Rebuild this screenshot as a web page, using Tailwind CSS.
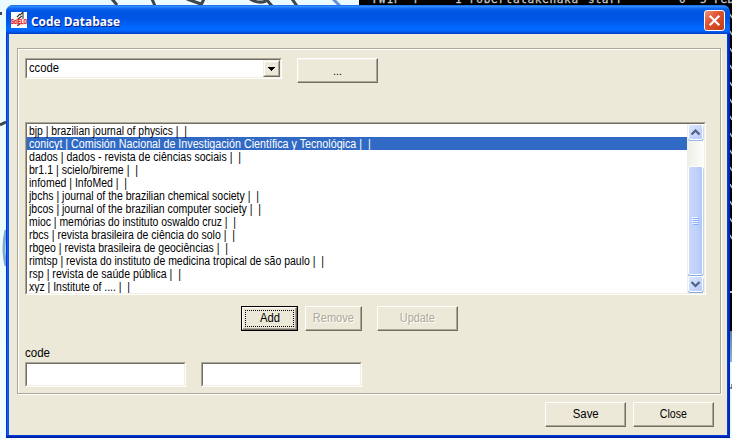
<!DOCTYPE html>
<html lang="en">
<head>
<meta charset="utf-8">
<title>Code Database</title>
<script src="https://cdn.jsdelivr.net/npm/@tailwindcss/browser@4"></script>
</head>
<body class="relative w-[732px] h-[439px] overflow-hidden bg-[#f0ffff] font-['Liberation_Sans',Arial,sans-serif] text-[12px] leading-[13px] text-black">
<!-- desktop behind the dialog -->
<svg class="absolute left-0 top-0" width="732" height="439" viewBox="0 0 732 439">
  <defs><linearGradient id="sky" x2="0" y2="1"><stop offset="0" stop-color="#e9fbfd"/><stop offset="1" stop-color="#f0ffff"/></linearGradient>
  <linearGradient id="blk" x2="0" y2="1"><stop offset="0" stop-color="#5e83ac"/><stop offset="1" stop-color="#86b4d8"/></linearGradient></defs>
  <rect width="732" height="439" fill="url(#sky)"/>
  <g fill="none" stroke="#3f444e" stroke-width="3">
    <path d="M0 13.500L2 13.500M0 125L6 122M112 -1L117 5M152 -1L155 6M187 -1L201 4M201 5L204 -1M250 -1Q258 4 266 1M266 -1L272 6M292 -1L297 6"/>
    <path d="M6 230Q2 248 6 266" stroke="#7fa9d8"/><path d="M333 -1L340 6" stroke="#6a90d8"/>
  </g>
  <rect x="359" y="0" width="373" height="331" fill="#000"/>
  <rect x="727" y="331" width="5" height="31" fill="url(#blk)"/>
  <rect x="727" y="362" width="5" height="77" fill="#eefbfb"/>
  <path d="M730 292h2" stroke="#ccc" stroke-width="2"/>
  <path d="M730 388h2v-4" stroke="#222" fill="none"/>
  <g fill="#c8c8c8" stroke="#c8c8c8" stroke-width=".3" font-family="'DejaVu Sans Mono',monospace" font-size="11">
    <text x="371" y="2.500" textLength="22">TW1</text><text x="393" y="2.500">r</text><text x="413" y="2.500">r</text><text x="455" y="2.500">1</text><text x="469" y="2.500" textLength="109">robertatakenaka</text><text x="588" y="2.500" textLength="34">staff</text><text x="679" y="2.500">0</text><text x="700" y="2.500">5</text><text x="714" y="2.500">Feb</text>
  </g>
  <path d="M730 14l2 4M730 31l2 4M730 48l2 4M730 65l2 4M730 82l2 4M730 99l2 4M730 116l2 4M730 133l2 4M730 150l2 4M730 167l2 4M730 184l2 4M730 201l2 4M730 218l2 4M730 235l2 4" stroke="#a9bdcb" stroke-width="1.5"/>
</svg>

<main class="relative ml-[6px] mt-[5px] w-[724px] h-[433px] flex flex-col rounded-t-[7px] overflow-hidden bg-[linear-gradient(90deg,#0831d9_0,#0831d9_1px,#1660ee_1px,#0855e5_3px,#0044dd_721px,#0036d6_722px,#001ca0_724px)]">
  <header class="h-[29px] shrink-0 flex items-center pl-[5px] pr-[5px] bg-[linear-gradient(180deg,#0855dd_0,#3a92ff_1px,#2481fb_2px,#0a62ee_4px,#0054e3_7px,#0055e5_14px,#005ff5_19px,#0068ff_22px,#0066ff_26px,#0052e0_27px,#003fd0_29px)]">
    <svg class="mt-[1px] shrink-0" width="16" height="16" viewBox="0 0 16 16">
      <rect width="16" height="16" fill="#fff"/>
      <path d="M6 5L9 2M9 3L12 0L12 7M7 7L11 4M6 13Q8 14 9 11" fill="none" stroke="#333" stroke-width="1.1"/>
      <text x="0" y="11.500" fill="#e81818" stroke="#e81818" stroke-width=".4" font-family="'Liberation Sans',sans-serif" font-size="7" font-weight="bold" textLength="16" lengthAdjust="spacingAndGlyphs">SciELO</text>
    </svg>
    <h1 class="ml-[4px] mt-[3px] whitespace-nowrap font-['Open_Sans',sans-serif] font-bold text-[13px] leading-[18px] text-white [text-shadow:1px_1px_0_#0a1883]"><span class="inline-block origin-left" data-w="89" data-font="bold 13px 'Open Sans'">Code Database</span></h1>
    <svg class="ml-auto mt-[1px]" width="21" height="21" viewBox="0 0 21 21">
      <defs><linearGradient id="red" x2="1" y2="1"><stop offset="0" stop-color="#ee9a80"/><stop offset=".4" stop-color="#e05433"/><stop offset="1" stop-color="#c13a12"/></linearGradient></defs>
      <rect x=".5" y=".5" width="20" height="20" rx="2.5" fill="url(#red)" stroke="#fff"/>
      <path d="M5.7 5.7L15.3 15.3M15.3 5.7L5.7 15.3" stroke="#fff" stroke-width="2.2"/>
    </svg>
  </header>

  <div class="mx-[3px] h-[401px] shrink-0 bg-[#ece9d8] pt-[14px] pl-[8px]">
    <section class="w-[704px] h-[346px] border border-[#aca899] shadow-[inset_1px_1px_0_#fff,1px_1px_0_#fff] pl-[7px] pt-[9px]">
      <div class="flex h-[26px] items-start gap-[15px]">
        <div class="w-[257px] h-[21px] border border-t-[#aca899] border-l-[#aca899] border-r-white border-b-white">
          <div class="h-[19px] border border-t-[#716f64] border-l-[#716f64] border-r-[#f1efe2] border-b-[#f1efe2] bg-white flex justify-between">
            <span class="pl-[2px] pt-[2px]"><span class="inline-block origin-left" data-w="30">ccode</span></span>
            <div class="w-[17px] h-[17px] border border-t-[#f1efe2] border-l-[#f1efe2] border-r-[#716f64] border-b-[#716f64]">
              <div class="h-[15px] bg-[#ece9d8] border border-t-white border-l-white border-r-[#aca899] border-b-[#aca899] flex items-center justify-center">
                <svg width="7" height="4" viewBox="0 0 7 4" shape-rendering="crispEdges"><path d="M0 0h7v1h-1v1h-1v1h-1v1h-1v-1h-1v-1h-1v-1h-1z"/></svg>
              </div>
            </div>
          </div>
        </div>
        <button class="w-[81px] h-[25px] border border-t-white border-l-white border-r-[#716f64] border-b-[#716f64] shadow-[inset_-1px_-1px_0_#aca899,inset_1px_1px_0_#f1efe2] pt-[2px] text-[11px]">...</button>
      </div>

      <div class="mt-[38px] w-[681px] h-[173px] border border-t-[#aca899] border-l-[#aca899] border-r-white border-b-white">
        <div class="h-[171px] border border-t-[#716f64] border-l-[#716f64] border-r-[#f1efe2] border-b-[#f1efe2] bg-white flex overflow-hidden">
          <ul class="w-[660px] h-[169px] overflow-hidden [&>li]:whitespace-pre [&>li]:h-[13px] [&>li]:pl-[2px] [&>li]:leading-[13px] [&_span]:inline-block [&_span]:origin-left [&_span]:translate-y-px">
            <li><span data-w="158">bjp | brazilian journal of physics |  |</span></li>
            <li class="bg-[#316ac5] text-white"><span data-w="342">conicyt | Comisión Nacional de Investigación Científica y Tecnológica |  |</span></li>
            <li><span data-w="212">dados | dados - revista de ciências sociais |  |</span></li>
            <li><span data-w="109">br1.1 | scielo/bireme |  |</span></li>
            <li><span data-w="98">infomed | InfoMed |  |</span></li>
            <li><span data-w="230">jbchs | journal of the brazilian chemical society |  |</span></li>
            <li><span data-w="232">jbcos | journal of the brazilian computer society |  |</span></li>
            <li><span data-w="207">mioc | memórias do instituto oswaldo cruz |  |</span></li>
            <li><span data-w="206">rbcs | revista brasileira de ciência do solo |  |</span></li>
            <li><span data-w="199">rbgeo | revista brasileira de geociências |  |</span></li>
            <li><span data-w="295">rimtsp | revista do instituto de medicina tropical de são paulo |  |</span></li>
            <li><span data-w="152">rsp | revista de saúde pública |  |</span></li>
            <li><span data-w="101">xyz | Institute of .... |  |</span></li>
          </ul>
          <svg width="17" height="169" viewBox="0 0 17 169">
            <defs><linearGradient id="tr"><stop offset="0" stop-color="#eeede5"/><stop offset="1" stop-color="#fefefb"/></linearGradient>
            <linearGradient id="th"><stop offset="0" stop-color="#cad8fd"/><stop offset=".7" stop-color="#bdcffb"/><stop offset="1" stop-color="#b0c5f5"/></linearGradient>
            <linearGradient id="bt" x2="1" y2="1"><stop offset="0" stop-color="#dfe8ff"/><stop offset="1" stop-color="#b4c8f7"/></linearGradient></defs>
            <rect width="17" height="169" fill="url(#tr)"/>
            <g stroke="#fff">
              <rect x="1" y="1" width="15.5" height="16" rx="2" fill="#98b5e8" stroke="none"/>
              <rect x="1.5" y=".5" width="14" height="15" rx="1.5" fill="url(#bt)"/>
              <rect x="1" y="43" width="15.5" height="109" rx="2" fill="#84a8e4" stroke="none"/>
              <rect x="1.5" y="42.500" width="14" height="108" rx="1.5" fill="url(#th)"/>
              <rect x="1" y="153" width="15.5" height="16" rx="2" fill="#84a8e4" stroke="none"/>
              <rect x="1.500" y="152.500" width="14" height="15" rx="1.5" fill="url(#bt)"/>
            </g>
            <path d="M4.500 10.500L8.500 6.500L12.500 10.500M4.500 158L8.500 162L12.500 158" fill="none" stroke="#4d6185" stroke-width="2.200"/>
            <path d="M5 93.500h6M5 95.500h6M5 97.500h6M5 99.500h6" stroke="#eef4fe"/>
            <path d="M6 94.500h6M6 96.500h6M6 98.500h6M6 100.500h6" stroke="#8cb0f8"/>
          </svg>
        </div>
      </div>

      <div class="mt-[11px] ml-[216px] flex h-[25px]">
        <button class="w-[57px] h-[25px] border border-black p-0 mr-[7px]">
          <span class="block h-[23px] border border-t-white border-l-white border-r-[#716f64] border-b-[#716f64] shadow-[inset_-1px_-1px_0_#aca899] p-[2px]">
            <svg class="block" width="49" height="17" viewBox="0 0 49 17"><path d="M0 .5H49M0 16.500H49M.5 2V16M48.500 2V16" fill="none" stroke="#000" stroke-dasharray="1 1"/><text x="15" y="12" font-size="12" textLength="20" lengthAdjust="spacingAndGlyphs">Add</text></svg>
          </span>
        </button>
        <button class="w-[57px] h-[25px] border border-t-white border-l-white border-r-[#716f64] border-b-[#716f64] shadow-[inset_-1px_-1px_0_#aca899] text-[#aca899] [text-shadow:1px_1px_0_#fff]"><span class="inline-block" data-w="41">Remove</span></button>
        <button class="ml-[15px] w-[81px] h-[25px] border border-t-white border-l-white border-r-[#716f64] border-b-[#716f64] shadow-[inset_-1px_-1px_0_#aca899] text-[#aca899] [text-shadow:1px_1px_0_#fff]"><span class="inline-block" data-w="35">Update</span></button>
      </div>

      <label class="block mt-[16px] h-[15px] leading-[13px]"><span class="inline-block origin-left" data-w="25">code</span></label>
      <div class="flex gap-[15px]">
        <div class="w-[161px] h-[25px] border border-t-[#aca899] border-l-[#aca899] border-r-white border-b-white"><div class="h-[23px] bg-white border border-t-[#716f64] border-l-[#716f64] border-r-[#f1efe2] border-b-[#f1efe2]"></div></div>
        <div class="w-[161px] h-[25px] border border-t-[#aca899] border-l-[#aca899] border-r-white border-b-white"><div class="h-[23px] bg-white border border-t-[#716f64] border-l-[#716f64] border-r-[#f1efe2] border-b-[#f1efe2]"></div></div>
      </div>
    </section>
    <footer class="mt-[8px] ml-[528px] flex gap-[7px]">
      <button class="w-[81px] h-[25px] border border-t-white border-l-white border-r-[#716f64] border-b-[#716f64] shadow-[inset_-1px_-1px_0_#aca899]"><span class="inline-block" data-w="26">Save</span></button>
      <button class="w-[81px] h-[25px] border border-t-white border-l-white border-r-[#716f64] border-b-[#716f64] shadow-[inset_-1px_-1px_0_#aca899]"><span class="inline-block" data-w="27">Close</span></button>
    </footer>
  </div>
  <div class="h-[3px] bg-[linear-gradient(180deg,#0a46e0_0,#0030c8_1px,#001694_3px)]"></div>
</main>
<script>
  // Condense each label to its design width.
  var ctx = document.createElement('canvas').getContext('2d');
  document.querySelectorAll('[data-w]').forEach(function (el) {
    ctx.font = el.dataset.font || "12px 'Liberation Sans'";
    el.style.transform = 'scaleX(' + (+el.dataset.w / ctx.measureText(el.textContent).width) + ')';
  });
</script>
</body>
</html>
